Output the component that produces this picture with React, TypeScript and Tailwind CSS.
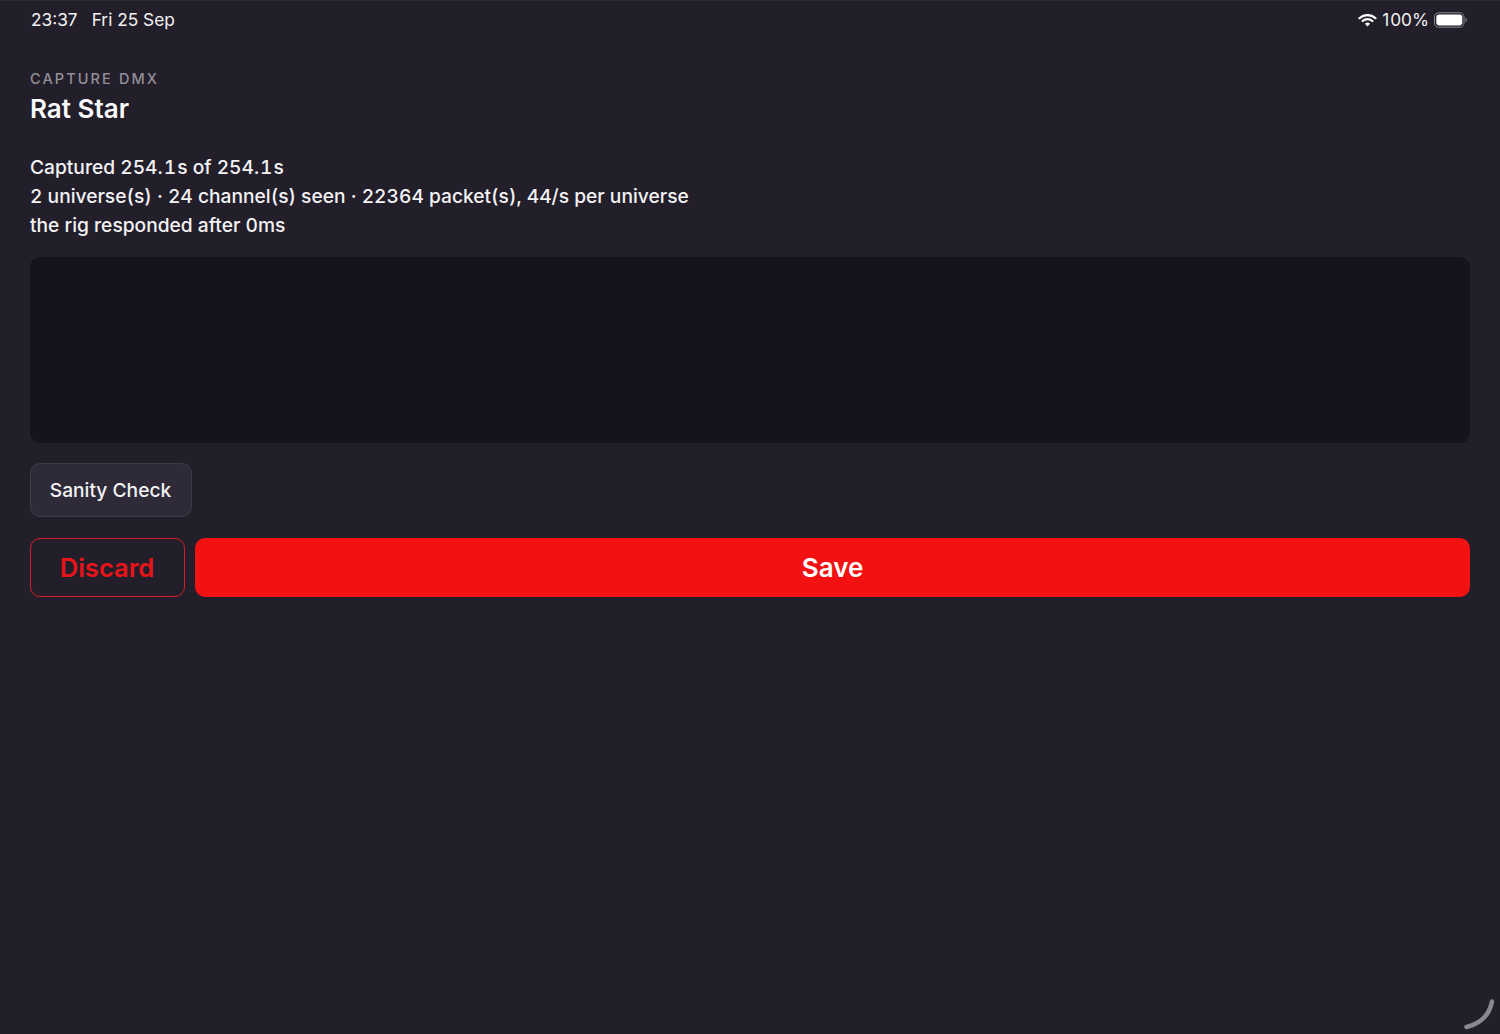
function One() {
  return <span className="mx-[1px]">1</span>;
}

export default function App() {
  return (
    <div className="relative h-[1034px] w-[1500px] overflow-hidden bg-[#231f2a] font-['Inter',sans-serif] text-white">
      <div className="flex h-[40px] items-center justify-between border-t border-[#2c2833] pb-[1px] pl-[31px] pr-[32px] text-[17.3px] leading-[38px]">
        <div className="flex gap-[14px] text-[#f2f1f3]">
          <span>23:37</span>
          <span>Fri 25 Sep</span>
        </div>
        <div className="flex items-center gap-[5px]">
          <svg width="19" height="14" viewBox="0 0 19 14" fill="none" stroke="white" strokeLinecap="round">
            <path d="M1.5 5.2C6 1 13 1 17.5 5.2" strokeWidth="2.2" />
            <path d="M4.6 8C7.4 5.6 11.6 5.6 14.4 8" strokeWidth="2.2" />
            <path d="M7.8 10.8C8.8 10 10.2 10 11.2 10.8L9.5 12.6Z" fill="white" strokeWidth="1.2" />
          </svg>
          <span className="text-[#f2f1f3]">
            <span className="mr-[1px]">1</span>00%
          </span>
          <svg width="34" height="16" viewBox="0 0 34 16" fill="none">
            <rect x="0.5" y="0.8" width="29.5" height="14.4" rx="4.2" stroke="#8b8890" />
            <rect x="2.3" y="2.6" width="26" height="10.8" rx="2.8" fill="white" />
            <path d="M31.5 5.8C32.4 6.1 32.8 7 32.8 8C32.8 9 32.4 9.9 31.5 10.2Z" fill="#8b8890" />
          </svg>
        </div>
      </div>

      <div className="px-[30px] pt-[30px]">
        <div className="text-[14.5px] leading-[18px] font-medium tracking-[2.1px] text-[#928e99]">CAPTURE DMX</div>
        <h1 className="mt-[5px] text-[26px] leading-[32px] font-semibold text-[#fafafa]">Rat Star</h1>

        <div className="mt-[28px] text-[19.2px] leading-[29px] font-medium tabular-nums text-[#f3f2f4]">
          <p>
            Captured 254.<One />s of 254.<One />s
          </p>
          <p>2 universe(s) · 24 channel(s) seen · 22364 packet(s), 44/s per universe</p>
          <p>the rig responded after 0ms</p>
        </div>

        <div className="mt-[17px] h-[186px] rounded-[10px] bg-[#16131c]" />

        <button className="mt-[20px] flex h-[54px] w-[162px] items-center justify-center rounded-[10px] border border-[#3e3a47] bg-[#2e2a37] pr-[1px] text-[19.2px] font-medium text-[#f3f2f4]">
          Sanity Check
        </button>

        <div className="mt-[21px] flex gap-[10px]">
          <button className="flex h-[59px] w-[155px] items-center justify-center rounded-[10px] border border-[#cf1f26] pt-[1px] pr-[1px] text-[25.6px] font-semibold text-[#e8141a]">
            Discard
          </button>
          <button className="flex h-[59px] flex-1 items-center justify-center rounded-[10px] bg-[#f31111] text-[26px] font-semibold text-white">
            Save
          </button>
        </div>
      </div>

      <svg className="absolute right-0 bottom-0" width="40" height="40" viewBox="0 0 40 40" fill="none">
        <path d="M6.5 33C19 30 29 23 32 7.5" stroke="#8a878e" strokeWidth="4.5" strokeLinecap="round" />
      </svg>
    </div>
  );
}
